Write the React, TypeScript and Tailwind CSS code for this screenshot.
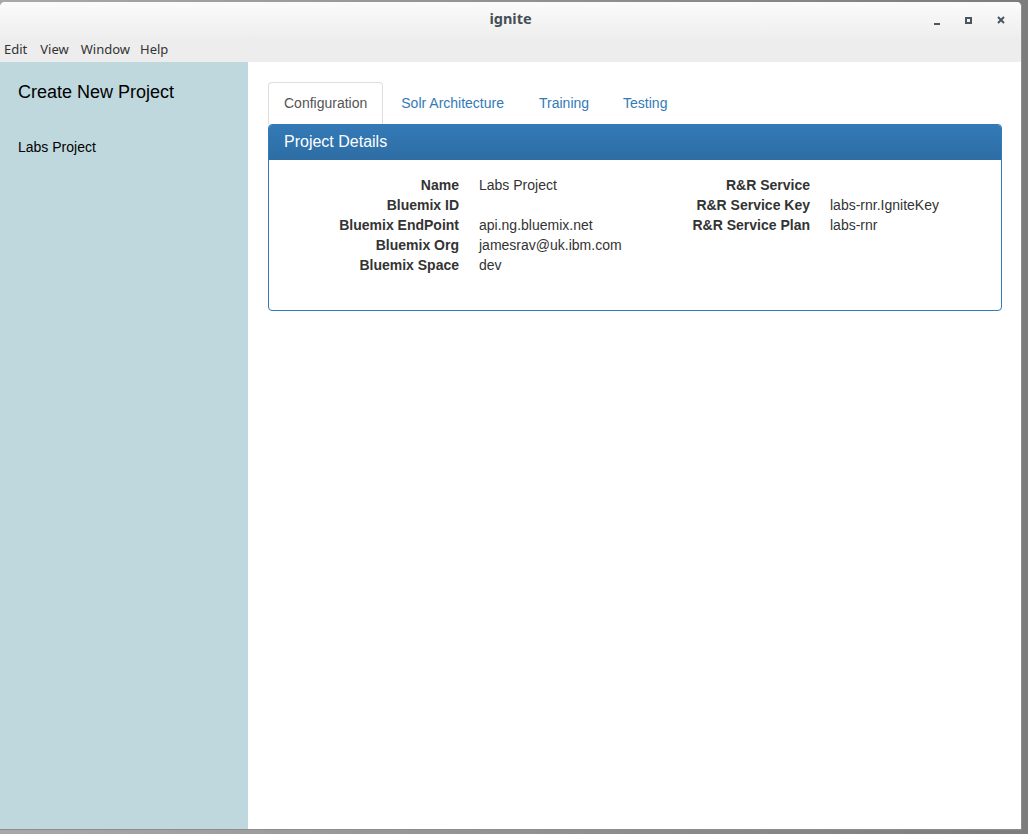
import React from "react";

const left: [string, string][] = [
  ["Name", "Labs Project"],
  ["Bluemix ID", ""],
  ["Bluemix EndPoint", "api.ng.bluemix.net"],
  ["Bluemix Org", "jamesrav@uk.ibm.com"],
  ["Bluemix Space", "dev"],
];
const right: [string, string][] = [
  ["R&R Service", ""],
  ["R&R Service Key", "labs-rnr.IgniteKey"],
  ["R&R Service Plan", "labs-rnr"],
];

function DL({ rows }: { rows: [string, string][] }) {
  return (
    <div className="flex flex-col">
      {rows.map(([k, v]) => (
        <div key={k} className="flex h-[20px] leading-[20px] text-[14px]">
          <div className="w-[160px] text-right font-bold text-[#333]">{k}</div>
          <div className="ml-[20px] text-[#333]">{v}</div>
        </div>
      ))}
    </div>
  );
}

export default function App() {
  return (
    <div className="w-[1028px] h-[834px] bg-gradient-to-r from-[#a8a8a8] to-[#7c7c7c] overflow-hidden">
      <div className="mt-[2px] w-[1022px] h-[828px] flex flex-col bg-white rounded-t-[5px] overflow-hidden border-r border-b border-[#8d8d8d]">
        {/* title bar */}
        <div className="h-[36px] shrink-0 relative bg-gradient-to-b from-[#fbfbfb] to-[#eeeeee] flex items-center justify-center">
          <span className="text-[14.5px] font-bold text-[#454f57] pb-[2px]" style={{ fontFamily: '"Noto Sans", sans-serif' }}>
            ignite
          </span>
          <div className="absolute right-0 top-0 h-full flex items-center">
            <div className="w-[33px] flex justify-center pt-[8px] pl-[4px]">
              <div className="w-[6px] h-[2px] bg-[#4a555e]" />
            </div>
            <div className="w-[33px] flex justify-center pl-[2px]">
              <div className="w-[7px] h-[7px] border-2 border-[#4a555e]" />
            </div>
            <div className="w-[37px] flex justify-center pr-[4px]">
              <svg width="8" height="8" viewBox="0 0 8 8">
                <path d="M1 1 L7 7 M7 1 L1 7" stroke="#4a555e" strokeWidth="2" />
              </svg>
            </div>
          </div>
        </div>
        {/* menu bar */}
        <div
          className="h-[24px] shrink-0 bg-[#ededed] flex items-center text-[13px] text-[#333]"
          style={{ fontFamily: '"Noto Sans", sans-serif' }}
        >
          <span className="ml-[4px]">Edit</span>
          <span className="ml-[13px]">View</span>
          <span className="ml-[12px]">Window</span>
          <span className="ml-[10px]">Help</span>
        </div>
        {/* body */}
        <div className="flex flex-1 min-h-0" style={{ fontFamily: '"Liberation Sans", Arial, sans-serif' }}>
          <div className="w-[248px] shrink-0 bg-[#bfd8de] px-[18px] pt-[19px]">
            <div className="text-[18px] leading-[22px] text-black">Create New Project</div>
            <div className="mt-[34px] text-[14px] leading-[20px] text-black">Labs Project</div>
          </div>
          <div className="flex-1 pl-[20px] pr-[20px] pt-[20px]">
            {/* tabs */}
            <div className="flex h-[42px] items-end">
              <div className="h-[42px] px-[15px] border border-b-0 border-[#dddddd] rounded-t-[4px] bg-white flex items-center text-[14px] text-[#555]">
                Configuration
              </div>
              <div className="h-[42px] ml-[3px] px-[15px] flex items-center text-[14px] text-[#337ab7]">Solr Architecture</div>
              <div className="h-[42px] ml-[5px] px-[15px] flex items-center text-[14px] text-[#337ab7]">Training</div>
              <div className="h-[42px] ml-[4px] px-[15px] flex items-center text-[14px] text-[#337ab7]">Testing</div>
            </div>
            {/* panel */}
            <div className="w-[734px] border border-[#337ab7] rounded-[4px] overflow-hidden">
              <div className="h-[35px] bg-gradient-to-b from-[#337ab7] to-[#2e6da4] px-[15px] pb-[1px] flex items-center text-[16px] text-white">
                Project Details
              </div>
              <div className="pt-[15px] pb-[35px] pl-[30px] grid grid-cols-[351px_351px]">
                <DL rows={left} />
                <DL rows={right} />
              </div>
            </div>
          </div>
        </div>
      </div>
    </div>
  );
}
